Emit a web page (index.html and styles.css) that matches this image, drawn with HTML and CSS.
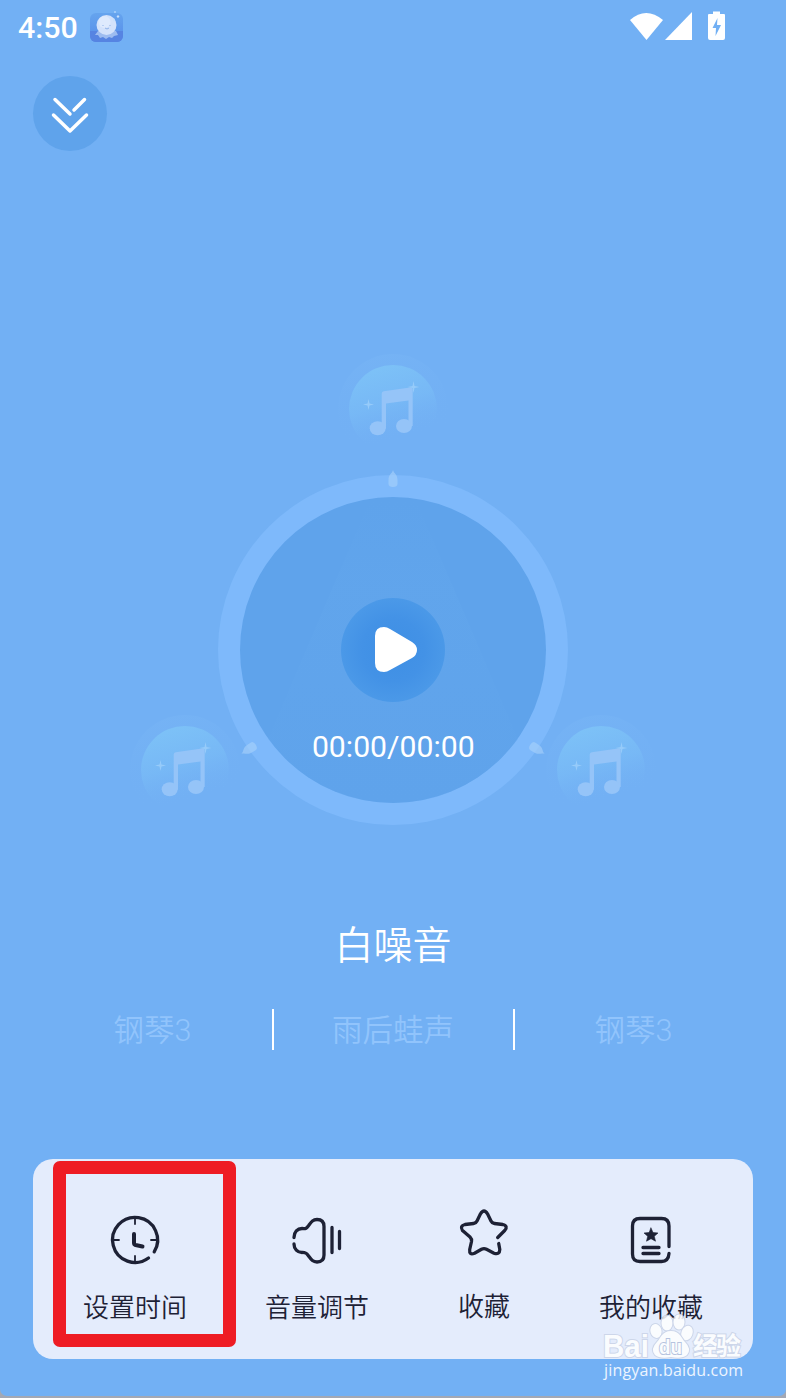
FILE: index.html
```html
<!DOCTYPE html>
<html lang="zh-CN">
<head>
<meta charset="utf-8">
<title>白噪音</title>
<link rel="stylesheet" href="styles.css">
</head>
<body>
<main class="screen">
  <header class="status">
    <span class="clock">4:50</span>
    <svg class="app-icon" viewBox="0 0 34 32" width="34" height="32">
      <defs><linearGradient id="app" x1="0" y1="0" x2="0" y2="1"><stop offset="0" stop-color="#65a4ee"/><stop offset="1" stop-color="#568ce9"/></linearGradient></defs>
      <rect x="0" y="2" width="33" height="29" rx="6" fill="url(#app)"/>
      <path d="M0 20h33v5a6 6 0 0 1-6 6H6a6 6 0 0 1-6-6z" fill="#5684e2"/>
      <path d="M8 20q8-5 18 0l2 4-4 1-2 2-3-1-3 2-3-2-3 1-2-3-3 0z" fill="#9dbcf0"/>
      <circle cx="16.500" cy="14" r="10" fill="#d3e2fb"/>
      <circle cx="14.500" cy="11" r="6" fill="#deeafd"/>
      <path d="M13 14v1M20 14v1M15 17q2 2 4 0" stroke="#90b3e9" stroke-width="1" fill="none"/>
      <path d="M25 0l1 1-1 1-1-1zM28 4l1.500 1.500L28 7l-1.500-1.500zM24 7l1 2-1 2-1-2z" fill="#c8e1fd"/>
    </svg>
    <svg class="signals" viewBox="0 0 98 32" width="98" height="32">
      <path d="M1 9Q17-5 34 9L17.500 29z" fill="#fff"/>
      <path d="M36 29L63 1V29z" fill="#fff"/>
      <path fill-rule="evenodd" d="M79 4q0-1 1-1h4V.500h7V3h4q1 0 1 1v23q0 2-2 2H81q-2 0-2-2zM88.500 7l-5 10h3.500l-.5 8 5.500-11h-4z" fill="#fff"/>
    </svg>
  </header>

  <div class="toolbar">
    <button class="collapse" aria-label="收起">
      <svg viewBox="0 0 74 74" width="74" height="74" fill="none" stroke="#fff" stroke-width="3.500" stroke-linecap="round">
        <path d="M22 23.500L37 38M51.500 23.500L41 34M20.500 39L37 55L53.500 39" stroke-linejoin="round"/>
      </svg>
    </button>
  </div>

  <svg class="dial" viewBox="0 0 786 500" width="786" height="500">
    <defs>
      <linearGradient id="bubble" x1=".3" y1="0" x2=".6" y2="1"><stop offset="0" stop-color="#7dc2f7"/><stop offset=".45" stop-color="#78baf6" stop-opacity=".8"/><stop offset=".85" stop-color="#72b0f4" stop-opacity="0"/></linearGradient>
      <linearGradient id="halo" x1=".3" y1="0" x2=".5" y2="1"><stop offset="0" stop-color="#7ab7f6" stop-opacity=".4"/><stop offset=".8" stop-color="#72b0f4" stop-opacity="0"/></linearGradient>
      <linearGradient id="beam" x1="0" y1="0" x2="0" y2="1"><stop offset="0" stop-color="#64a8ed" stop-opacity="0"/><stop offset=".3" stop-color="#64a8ed"/><stop offset="1" stop-color="#5fa3eb"/></linearGradient>
      <radialGradient id="core"><stop offset="0" stop-color="#3e8fe4"/><stop offset=".6" stop-color="#4392e6"/><stop offset="1" stop-color="#4b99e8"/></radialGradient>
      <g id="note">
        <circle r="55" fill="url(#halo)"/>
        <circle r="44" fill="url(#bubble)"/>
        <path d="M-11.300-15.500q0-2 2-2.300L17-21.500q2.700 0 2.700 2V17H15.500V-8.500L-7-5.500V19.500H-11.300z" fill="#95c4f8"/>
        <ellipse cx="-15.300" cy="19.300" rx="8" ry="7" fill="#95c4f8"/>
        <ellipse cx="11" cy="17" rx="8" ry="7" fill="#95c4f8"/>
        <path d="M20.500-28l1 5 5 1-5 1-1 5-1-5-5-1 5-1zM-24.500-10l1 4.500 4.500 1-4.500 1-1 4.500-1-4.500-4.500-1 4.500-1z" fill="#9dcffb" opacity=".8"/>
      </g>
      <path id="pin" d="M0-9C1-5 4.500-5 4.500 1V5Q4.500 8 0 8T-4.500 5V1C-4.500-5-1-5 0-9z" fill="#a5cffb" opacity=".65"/>
    </defs>
    <circle cx="393" cy="310" r="175" fill="#7eb9fb"/>
    <circle cx="393" cy="310" r="153" fill="#5fa3eb"/>
    <path d="M370 160h46L518 399Q467 463 393 463T268 399z" fill="url(#beam)" opacity=".35"/>
    <circle cx="393" cy="310" r="52" fill="url(#core)"/>
    <path d="M375 296q0-9 9-9 3 0 6 2l22 13q5 3 5 8t-5 8l-22 12q-3 2-6 2-9 0-9-9z" fill="#fff"/>
    <text class="time" x="393.300" y="417" text-anchor="middle">00:00/00:00</text>
    <use href="#note" x="393" y="69"/>
    <use href="#note" x="185" y="430"/>
    <use href="#note" x="601" y="430"/>
    <use href="#pin" transform="translate(393 139)"/>
    <use href="#pin" transform="translate(249 409) rotate(-122)"/>
    <use href="#pin" transform="translate(537 409) rotate(122)"/>
  </svg>

  <h1 class="title">白噪音</h1>
  <div class="tracks">
    <span class="track">钢琴3</span>
    <span class="track">雨后蛙声</span>
    <span class="track">钢琴3</span>
  </div>

  <nav class="panel">
    <div class="action selected">
      <svg class="icon" viewBox="0 0 56 56" width="56" height="56">
        <path d="M47.200 39.800A22.500 22.500 0 1 0 41.500 46"/>
        <path d="M28 6v6M28 44v6M6 28h6M44 28h6" stroke-width="1.800"/>
        <path d="M27 22v9q0 1.500 1.500 2L35.500 34.500" stroke-width="4"/>
      </svg>
      <span>设置时间</span>
    </div>
    <div class="action">
      <svg class="icon" viewBox="0 0 56 56" width="56" height="56">
        <path d="M5 25.500C5 20 8.500 16.500 13 16.500C17.500 17.200 18 15.500 20 13C22.500 9.500 24 7.500 28 7.500Q35 7.500 35 14.500V43Q35 50 28 50C24 50 22.500 48 20 44.500C18 42 17.500 40.200 13 40.500C8.500 40.500 5 37 5 32M43 15.500V40.500M50.500 19.500V36.500"/>
      </svg>
      <span>音量调节</span>
    </div>
    <div class="action favourite">
      <svg class="icon" viewBox="0 0 56 56" width="56" height="56">
        <path d="M41.700 32.500L48.700 25.500Q52.500 20.800 46.800 19.500L38.500 18.500Q36 18.200 35 16L31.500 8.800Q28 3.200 24.500 8.800L21 16Q20 18.200 17.500 18.500L9 19.500Q3.500 21 6.500 25.500L14 32Q16 34 15.500 36.500L13.700 44.500Q13 50.500 18.500 48.200L25.500 44.300Q28 43 30.500 44.300L38 48.200Q43.700 50 43.800 44.500L42.700 38.500"/>
      </svg>
      <span>收藏</span>
    </div>
    <div class="action">
      <svg class="icon" viewBox="0 0 56 56" width="56" height="56">
        <path d="M46 34.500V14Q46 6.500 38.500 6.500H17Q9.500 6.500 9.500 14V42Q9.500 49.500 17 49.500H38.500Q45.500 49.500 46 41.500M20 35.500H36M20 41.500H36"/>
        <path d="M28 16l2 4.500 5 .5-3.700 3.300 1.200 4.900-4.500-2.500-4.500 2.500 1.200-4.900L21 21l5-.5z" fill="#1d2135" stroke-width=".6"/>
      </svg>
      <span>我的收藏</span>
    </div>
  </nav>
  <svg class="watermark" viewBox="0 0 146 72" width="146" height="72">
    <g fill="#fff" stroke="#c9d3e7" stroke-width="2" paint-order="stroke" opacity=".85">
      <text class="brand" x="3" y="46" textLength="46" lengthAdjust="spacingAndGlyphs">Bai</text>
      <ellipse cx="56" cy="20" rx="5.500" ry="7" transform="rotate(-15 56 20)"/>
      <ellipse cx="67" cy="12" rx="5.500" ry="7.500"/>
      <ellipse cx="79" cy="11" rx="5.500" ry="7.500"/>
      <ellipse cx="87" cy="22" rx="5.500" ry="7.500" transform="rotate(20 87 22)"/>
      <path d="M71 20C62 20 61 27 57 31Q50 38 55 44Q60 48 71 46Q82 48 87 44Q92 38 85 31C81 27 80 20 71 20z"/>
      <text class="du" x="59" y="43" textLength="23" lengthAdjust="spacingAndGlyphs">du</text>
      <text class="word" x="93" y="44" textLength="48">经验</text>
    </g>
    <text class="url" x="4" y="65" textLength="139">jingyan.baidu.com</text>
  </svg>
</main>
</body>
</html>
```
FILE: styles.css
```css
*, *::after { box-sizing: border-box; }
body {
  margin: 0;
  background: #a3a8b4;
  font-family: Roboto, "Noto Sans CJK SC", sans-serif;
}
.screen {
  position: relative;
  display: flex;
  flex-direction: column;
  width: 786px;
  height: 1396px;
  background: #72b0f4;
  border-radius: 0 0 7px 7px;
}
.status {
  display: flex;
  height: 56px;
  padding: 11px 59px 0 18px;
  color: #fff;
}
.clock { width: 72px; font-size: 30.4px; line-height: 34px; font-weight: 500; }
.signals { margin-left: auto; }
.toolbar { height: 284px; padding: 20px 33px 0; }
.collapse {
  display: block;
  width: 74px;
  height: 75px;
  padding: 0;
  border: 0;
  border-radius: 50%;
  background: #5fa3eb;
}
.dial { display: block; flex: none; }
.time { font-size: 30.2px; fill: #fff; }
.title {
  height: 60px;
  margin: 76px 0 0;
  color: #fff;
  font-size: 39px;
  line-height: 60px;
  font-weight: 350;
  text-align: center;
}
.tracks {
  display: grid;
  grid-template-columns: 239px 241px 240px;
  height: 41px;
  margin: 33px 33px 0;
  color: #91c4fc;
  font-size: 30.5px;
  line-height: 41px;
  font-weight: 350;
  text-align: center;
}
.track { height: 41px; padding-top: 1px; }
.track + .track { padding-right: 1px; border-left: 2px solid #fff; }
.panel {
  display: flex;
  gap: 89px;
  height: 200px;
  margin: 109px 33px 0;
  padding: 53px 50px 0;
  border-radius: 20px;
  background: #e4ecfc;
}
.action {
  position: relative;
  display: flex;
  flex-direction: column;
  align-items: center;
  color: #1d2135;
  font-size: 26px;
  line-height: 40px;
  font-weight: 350;
  white-space: nowrap;
}
.action span { margin-top: 20px; }
.favourite { margin: -1px -2px 0; }
.favourite .icon { margin-top: -6px; margin-bottom: 6px; }
.icon {
  fill: none;
  stroke: #1d2135;
  stroke-width: 3.3;
  stroke-linecap: round;
  stroke-linejoin: round;
}
.selected { margin-right: -11px; }
.selected::after {
  content: "";
  position: absolute;
  top: -51px;
  left: -30px;
  width: 183px;
  height: 186px;
  border: 13px solid #ee1c24;
  border-radius: 7px;
}
.watermark { position: absolute; left: 600px; top: 1311px; }
.brand { font: 700 31px "Liberation Sans", sans-serif; }
.du { font: 700 21px "Liberation Sans", sans-serif; stroke: #aebdda; }
.word { font: 700 25px "Noto Sans CJK SC", sans-serif; }
.url { font: 16px "Open Sans", sans-serif; fill: #edf5ff; }
```
